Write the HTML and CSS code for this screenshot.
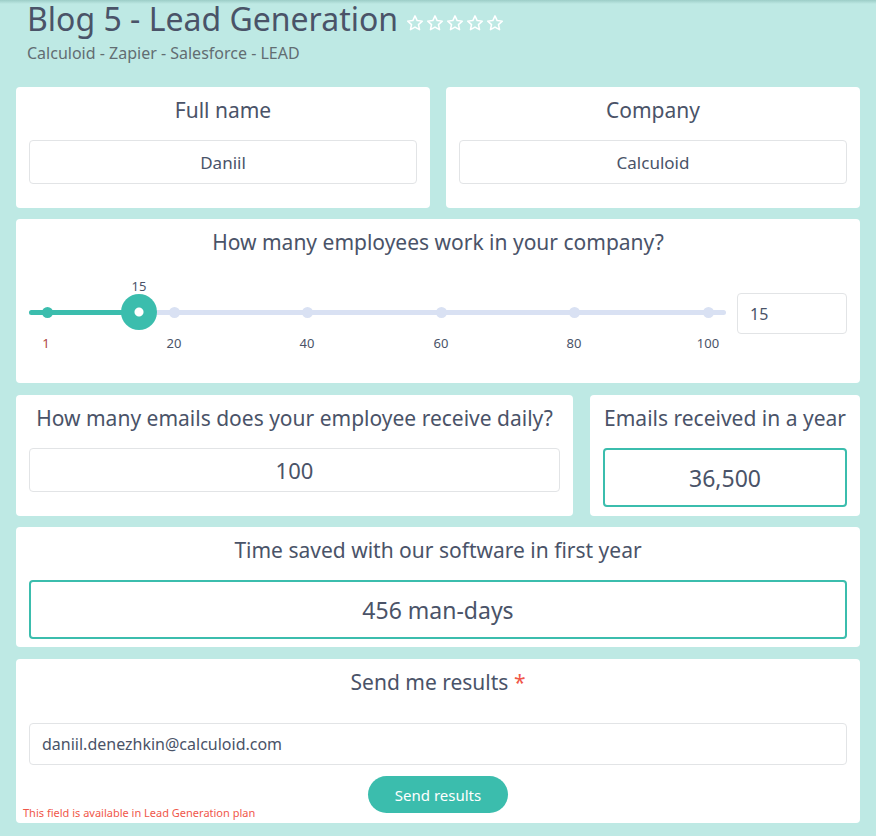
FILE: index.html
```html
<!DOCTYPE html>
<html lang="en">
<head>
    <meta charset="UTF-8">
    <title>Blog 5 - Lead Generation</title>
    <link rel="stylesheet" href="styles.css">
</head>
<body>
    <div class="header">
        <h1 class="title">Blog 5 - Lead Generation
            <span class="stars">
                <svg viewBox="0 0 24 24"><path d="M12 2.5l2.9 6.3 6.8.7-5.1 4.6 1.5 6.8L12 17.4l-6.1 3.5 1.5-6.8-5.1-4.6 6.8-.7z"/></svg>
                <svg viewBox="0 0 24 24"><path d="M12 2.5l2.9 6.3 6.8.7-5.1 4.6 1.5 6.8L12 17.4l-6.1 3.5 1.5-6.8-5.1-4.6 6.8-.7z"/></svg>
                <svg viewBox="0 0 24 24"><path d="M12 2.5l2.9 6.3 6.8.7-5.1 4.6 1.5 6.8L12 17.4l-6.1 3.5 1.5-6.8-5.1-4.6 6.8-.7z"/></svg>
                <svg viewBox="0 0 24 24"><path d="M12 2.5l2.9 6.3 6.8.7-5.1 4.6 1.5 6.8L12 17.4l-6.1 3.5 1.5-6.8-5.1-4.6 6.8-.7z"/></svg>
                <svg viewBox="0 0 24 24"><path d="M12 2.5l2.9 6.3 6.8.7-5.1 4.6 1.5 6.8L12 17.4l-6.1 3.5 1.5-6.8-5.1-4.6 6.8-.7z"/></svg>
            </span>
        </h1>
        <p class="subtitle">Calculoid - Zapier - Salesforce - LEAD</p>
    </div>

    <div class="calc">
        <div class="row">
            <div class="card">
                <div class="label">Full name</div>
                <div class="field">Daniil</div>
            </div>
            <div class="card">
                <div class="label">Company</div>
                <div class="field">Calculoid</div>
            </div>
        </div>

        <div class="card sliderCard">
            <div class="label">How many employees work in your company?</div>
            <div class="sliderRow">
                <div class="slider">
                    <div class="track"></div>
                    <div class="fill"></div>
                    <span class="dot on" style="left:18px"></span>
                    <span class="dot" style="left:145px"></span>
                    <span class="dot" style="left:278px"></span>
                    <span class="dot" style="left:412px"></span>
                    <span class="dot" style="left:545px"></span>
                    <span class="dot" style="left:679px"></span>
                    <span class="knob" style="left:110px"></span>
                    <span class="knobValue" style="left:110px">15</span>
                    <span class="tick red" style="left:17px">1</span>
                    <span class="tick" style="left:145px">20</span>
                    <span class="tick" style="left:278px">40</span>
                    <span class="tick" style="left:412px">60</span>
                    <span class="tick" style="left:545px">80</span>
                    <span class="tick" style="left:679px">100</span>
                </div>
                <div class="numBox">15</div>
            </div>
        </div>

        <div class="row rowUneven">
            <div class="card">
                <div class="label">How many emails does your employee receive daily?</div>
                <div class="field big">100</div>
            </div>
            <div class="card narrow outCard">
                <div class="label">Emails received in a year</div>
                <div class="output">36,500</div>
            </div>
        </div>

        <div class="card outCard savedCard">
            <div class="label">Time saved with our software in first year</div>
            <div class="output">456 man-days</div>
        </div>

        <div class="card sendCard">
            <div class="label">Send me results <span class="req">*</span></div>
            <div class="field left">daniil.denezhkin@calculoid.com</div>
            <div class="btnRow"><button class="sendBtn">Send results</button></div>
            <div class="note">This field is available in Lead Generation plan</div>
        </div>
    </div>
</body>
</html>
```

FILE: styles.css
```css
* {
    box-sizing: border-box;
}

body {
    margin: 0;
    background: linear-gradient(#9ccdc7, #bee9e4 4px) no-repeat #bee9e4;
    font-family: "Noto Sans", "Open Sans", sans-serif;
    color: #4a5368;
}

.header {
    padding: 0 27px;
}

.title {
    margin: 0;
    font-size: 32px;
    font-weight: 400;
    line-height: 38px;
    color: #4a5368;
}

.stars {
    display: inline-flex;
    gap: 2px;
    vertical-align: -1px;
}

.stars svg {
    width: 18px;
    height: 18px;
    fill: none;
    stroke: #ffffff;
    stroke-width: 2;
    stroke-linejoin: round;
}

.subtitle {
    margin: 4px 0 0 0;
    font-size: 16px;
    line-height: 22px;
    color: #626d72;
}

.calc {
    padding: 23px 16px 0 16px;
    display: flex;
    flex-direction: column;
    gap: 11px;
}

.row {
    display: flex;
    gap: 16px;
}

.row .card {
    flex: 1;
}

.rowUneven {
    gap: 17px;
}

.rowUneven .narrow {
    flex: 0 0 270px;
}

.card {
    background: #ffffff;
    border-radius: 4px;
    padding: 9px 13px 24px 13px;
}

.outCard {
    padding-bottom: 8px;
}

.savedCard {
    margin-bottom: 1px;
}

.label {
    text-align: center;
    font-size: 21px;
    line-height: 28px;
    margin-bottom: 16px;
    white-space: nowrap;
}

.field {
    height: 44px;
    border: 1px solid #e2e4e6;
    border-radius: 4px;
    display: flex;
    align-items: center;
    justify-content: center;
    font-size: 17px;
}

.field.big {
    font-size: 22px;
}

.field.left {
    height: 42px;
    justify-content: flex-start;
    padding-left: 12px;
    font-size: 16px;
}

.output {
    height: 59px;
    border: 2px solid #3bbdad;
    border-radius: 4px;
    display: flex;
    align-items: center;
    justify-content: center;
    font-size: 23px;
}

.sliderCard {
    padding-bottom: 0;
    height: 164px;
    margin-bottom: 1px;
}

.sliderRow {
    display: flex;
    gap: 11px;
    align-items: flex-start;
}

.slider {
    position: relative;
    flex: 1;
    height: 90px;
}

.track {
    position: absolute;
    left: 0;
    right: 0;
    top: 38px;
    height: 5px;
    border-radius: 3px;
    background: #d9e1f3;
}

.fill {
    position: absolute;
    left: 0;
    width: 110px;
    top: 38px;
    height: 5px;
    border-radius: 3px;
    background: #3bbdad;
}

.dot {
    position: absolute;
    top: 35px;
    width: 11px;
    height: 11px;
    margin-left: -5px;
    border-radius: 50%;
    background: #d9e1f3;
}

.dot.on {
    background: #3bbdad;
}

.knob {
    position: absolute;
    top: 22px;
    width: 36px;
    height: 36px;
    margin-left: -18px;
    border-radius: 50%;
    background: radial-gradient(circle, #ffffff 4px, #3bbdad 5px);
}

.knobValue {
    position: absolute;
    top: 6px;
    width: 30px;
    margin-left: -15px;
    text-align: center;
    font-size: 13px;
    line-height: 16px;
}

.tick {
    position: absolute;
    top: 63px;
    width: 40px;
    margin-left: -20px;
    text-align: center;
    font-size: 13px;
    line-height: 16px;
}

.tick.red {
    color: #b0453f;
}

.numBox {
    margin-top: 21px;
    width: 110px;
    height: 41px;
    border: 1px solid #e2e4e6;
    border-radius: 4px;
    display: flex;
    align-items: center;
    padding-left: 12px;
    font-size: 16px;
}

.sendCard {
    padding-bottom: 3px;
}

.sendCard .label {
    margin-bottom: 27px;
}

.req {
    color: #f0574a;
}

.btnRow {
    display: flex;
    justify-content: center;
    margin-top: 11px;
}

.sendBtn {
    width: 140px;
    height: 37px;
    border: none;
    border-radius: 19px;
    background-color: #3bbdad;
    color: #ffffff;
    font-family: inherit;
    font-size: 15px;
}

.note {
    margin: -7px 0 0 -6px;
    font-size: 11px;
    line-height: 14px;
    color: #f0574a;
}
```
